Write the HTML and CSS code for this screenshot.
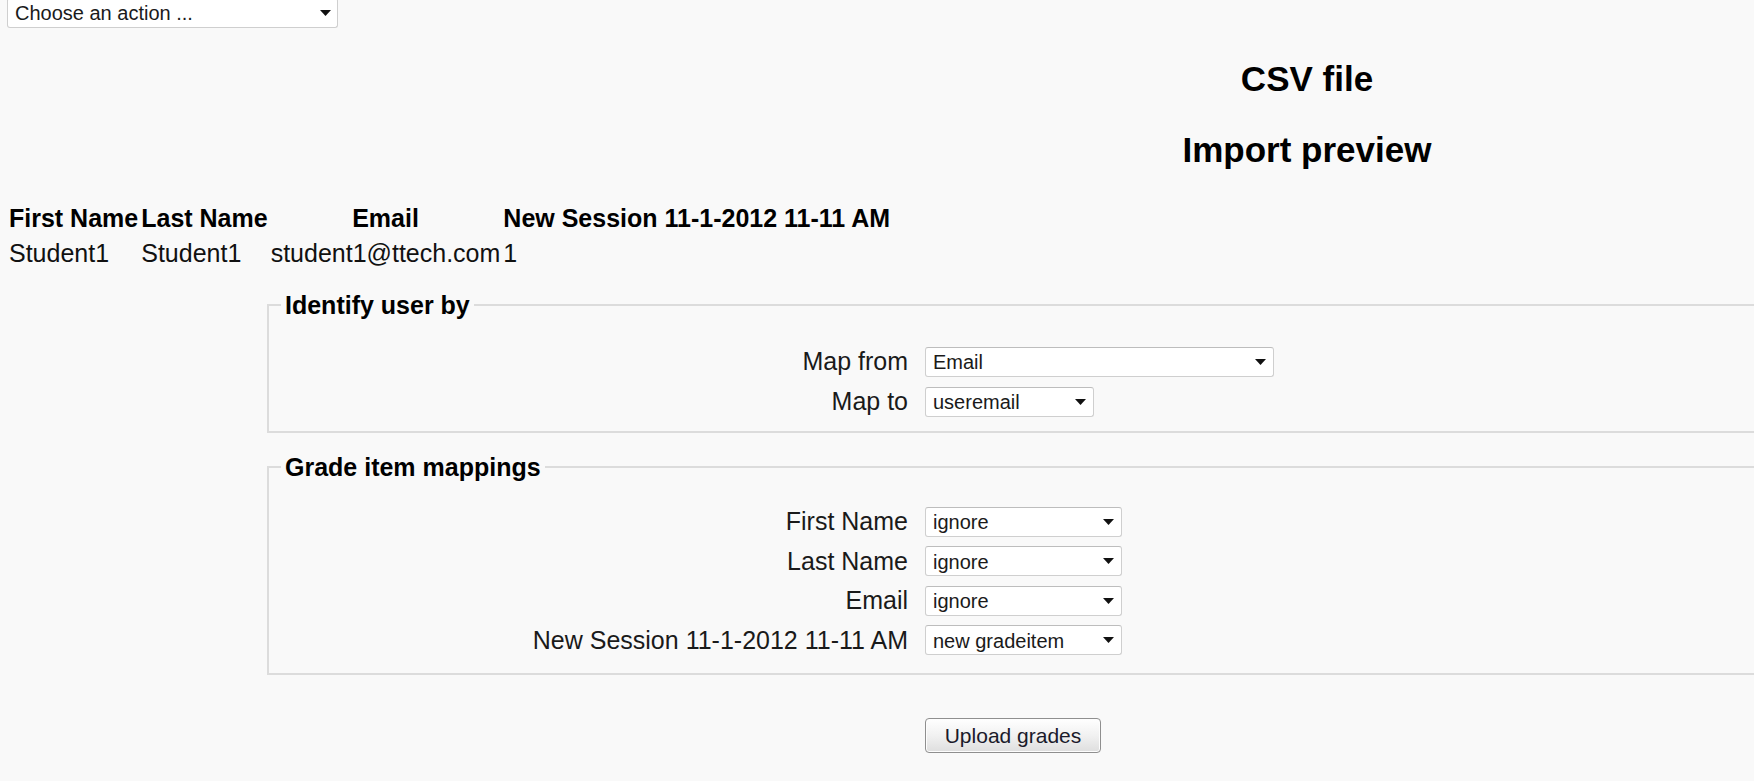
FILE: index.html
```html
<!DOCTYPE html>
<html lang="en">
<head>
<meta charset="utf-8">
<title>Import preview</title>
<link rel="stylesheet" href="styles.css">
</head>
<body>
<div class="select action-select">
  <span class="select-text">Choose an action ...</span>
  <svg class="arrow" width="11" height="6" viewBox="0 0 11 6"><path d="M0 0h11L5.5 6z"/></svg>
</div>

<div class="headings">
  <h2 class="title">CSV file</h2>
  <h2 class="title">Import preview</h2>
</div>

<table class="preview">
  <tr>
    <th>First Name</th>
    <th>Last Name</th>
    <th>Email</th>
    <th>New Session 11-1-2012 11-11 AM</th>
  </tr>
  <tr>
    <td>Student1</td>
    <td>Student1</td>
    <td>student1@ttech.com</td>
    <td>1</td>
  </tr>
</table>

<fieldset class="group group-identify">
  <legend>Identify user by</legend>
  <div class="form-grid">
    <label class="form-label">Map from</label>
    <div class="select w-wide">
      <span class="select-text">Email</span>
      <svg class="arrow" width="11" height="6" viewBox="0 0 11 6"><path d="M0 0h11L5.5 6z"/></svg>
    </div>
    <label class="form-label">Map to</label>
    <div class="select w-small">
      <span class="select-text">useremail</span>
      <svg class="arrow" width="11" height="6" viewBox="0 0 11 6"><path d="M0 0h11L5.5 6z"/></svg>
    </div>
  </div>
</fieldset>

<fieldset class="group group-mappings">
  <legend>Grade item mappings</legend>
  <div class="form-grid tight">
    <label class="form-label">First Name</label>
    <div class="select w-mid">
      <span class="select-text">ignore</span>
      <svg class="arrow" width="11" height="6" viewBox="0 0 11 6"><path d="M0 0h11L5.5 6z"/></svg>
    </div>
    <label class="form-label">Last Name</label>
    <div class="select w-mid">
      <span class="select-text">ignore</span>
      <svg class="arrow" width="11" height="6" viewBox="0 0 11 6"><path d="M0 0h11L5.5 6z"/></svg>
    </div>
    <label class="form-label">Email</label>
    <div class="select w-mid">
      <span class="select-text">ignore</span>
      <svg class="arrow" width="11" height="6" viewBox="0 0 11 6"><path d="M0 0h11L5.5 6z"/></svg>
    </div>
    <label class="form-label">New Session 11-1-2012 11-11 AM</label>
    <div class="select w-mid">
      <span class="select-text">new gradeitem</span>
      <svg class="arrow" width="11" height="6" viewBox="0 0 11 6"><path d="M0 0h11L5.5 6z"/></svg>
    </div>
  </div>
</fieldset>

<div class="actions">
  <button class="button" type="button">Upload grades</button>
</div>
</body>
</html>
```

FILE: styles.css
```css
html, body {
  margin: 0;
  padding: 0;
  background: #f9f9f9;
  overflow: hidden;
}

body {
  font-family: "Liberation Sans", Arial, sans-serif;
  color: #111;
}

/* custom select look */
.select {
  box-sizing: border-box;
  height: 30px;
  display: flex;
  align-items: center;
  justify-content: space-between;
  padding: 0 7px 0 7px;
  background: #fff;
  border: 1px solid #cfcfcf;
  border-top-color: #bdbdbd;
  border-radius: 3px;
  font-size: 20px;
  color: #1a1a1a;
}

.select-text {
  white-space: nowrap;
  padding-top: 2px;
}

.arrow {
  flex: none;
  fill: #111;
}

.action-select {
  width: 331px;
  margin: -2px 0 0 7px;
  padding-left: 7px;
  padding-right: 6px;
}

.action-select .select-text {
  padding-top: 0;
}

.headings {
  margin-left: 860px;
  text-align: center;
}

.title {
  margin: 31px 0 0;
  font-size: 35px;
  line-height: 40px;
  font-weight: bold;
  color: #000;
}

.preview {
  margin: 31px 0 0 6px;
  border-collapse: separate;
  border-spacing: 3px;
  font-size: 25px;
  line-height: 29px;
}

.preview th,
.preview td {
  padding: 0;
  white-space: nowrap;
}

.preview th {
  font-weight: bold;
  text-align: center;
  color: #000;
}

.preview td {
  padding-top: 3px;
  text-align: left;
  color: #111;
}

.group {
  margin: 0 0 0 267px;
  border: 2px solid #dcdcdc;
  border-right: none;
  min-width: 0;
}

.group legend {
  margin-left: 12px;
  padding: 0 4px;
  font-size: 25px;
  line-height: 29px;
  font-weight: bold;
  color: #000;
}

.group-identify {
  margin-top: 19.5px;
  padding: 27px 0 14px 0;
}

.group-mappings {
  margin-top: 20px;
  padding: 25px 0 18px 0;
}

.form-grid {
  display: grid;
  grid-template-columns: 639px max-content;
  column-gap: 17px;
  row-gap: 10px;
  align-items: center;
}

.form-grid.tight {
  row-gap: 9.5px;
}

.form-label {
  text-align: right;
  font-size: 25px;
  line-height: 29px;
  color: #1a1a1a;
  white-space: nowrap;
}

.w-wide { width: 349px; }
.w-small { width: 169px; }
.w-mid { width: 197px; }

.actions {
  margin: 43px 0 0 925px;
}

.button {
  box-sizing: border-box;
  width: 176px;
  height: 35px;
  padding: 0;
  font-family: "Liberation Sans", Arial, sans-serif;
  font-size: 21px;
  color: #1a1a2a;
  background: linear-gradient(#ffffff, #f1f1f1 50%, #dedede);
  border: 1px solid #8f8f8f;
  border-radius: 4px;
  box-shadow: inset 0 0 0 1px #fdfdfd;
}
```
